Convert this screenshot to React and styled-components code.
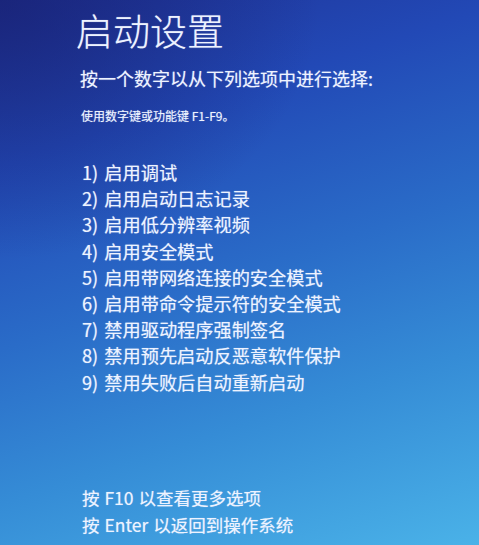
import React from "react";
import styled, { createGlobalStyle } from "styled-components";

const Global = createGlobalStyle`
  html, body { margin: 0; padding: 0; }
  body { font-family: "Noto Sans CJK SC", "Noto Sans", sans-serif; }
`;

const Screen = styled.div`
  width: 479px;
  height: 545px;
  overflow: hidden;
  box-sizing: border-box;
  padding: 8px 0 0 76px;
  color: #eef3ff;
  text-shadow: 0 0 1px rgba(230, 240, 255, 0.6);
  background:
    radial-gradient(ellipse 320px 260px at 0% 0%, rgba(22, 28, 105, 0.6), rgba(22, 28, 105, 0) 100%),
    linear-gradient(162deg, #1f3296 0%, #2249b6 24%, #2a6cc8 50%, #358cd6 72%, #4ab2e8 100%);
  display: flex;
  flex-direction: column;
`;

const Title = styled.h1`
  margin: 0;
  font-size: 37px;
  line-height: 44px;
  font-weight: 300;
`;

const Prompt = styled.p`
  margin: 13px 0 0 4px;
  font-size: 18px;
  line-height: 26px;
  font-weight: 400;
`;

const Hint = styled.p`
  margin: 16px 0 0 5px;
  font-size: 12px;
  line-height: 18px;
`;

const Options = styled.ol`
  list-style: none;
  margin: 34px 0 0 6px;
  padding: 0;
`;

const Option = styled.li`
  font-size: 18.2px;
  line-height: 26.2px;
  white-space: nowrap;
  word-spacing: 2px;
`;

const Footer = styled.div`
  margin: 89px 0 0 6px;
  display: flex;
  flex-direction: column;
`;

const FooterLine = styled.div`
  font-size: 17.5px;
  line-height: 27px;
  white-space: nowrap;
  word-spacing: 1px;
`;

const items = [
  "启用调试",
  "启用启动日志记录",
  "启用低分辨率视频",
  "启用安全模式",
  "启用带网络连接的安全模式",
  "启用带命令提示符的安全模式",
  "禁用驱动程序强制签名",
  "禁用预先启动反恶意软件保护",
  "禁用失败后自动重新启动",
];

export default function App() {
  return (
    <>
      <Global />
      <Screen>
        <Title>启动设置</Title>
        <Prompt>按一个数字以从下列选项中进行选择:</Prompt>
        <Hint>使用数字键或功能键 F1-F9。</Hint>
        <Options>
          {items.map((t, i) => (
            <Option key={i}>
              {i + 1}) {t}
            </Option>
          ))}
        </Options>
        <Footer>
          <FooterLine>按 F10 以查看更多选项</FooterLine>
          <FooterLine>按 Enter 以返回到操作系统</FooterLine>
        </Footer>
      </Screen>
    </>
  );
}
